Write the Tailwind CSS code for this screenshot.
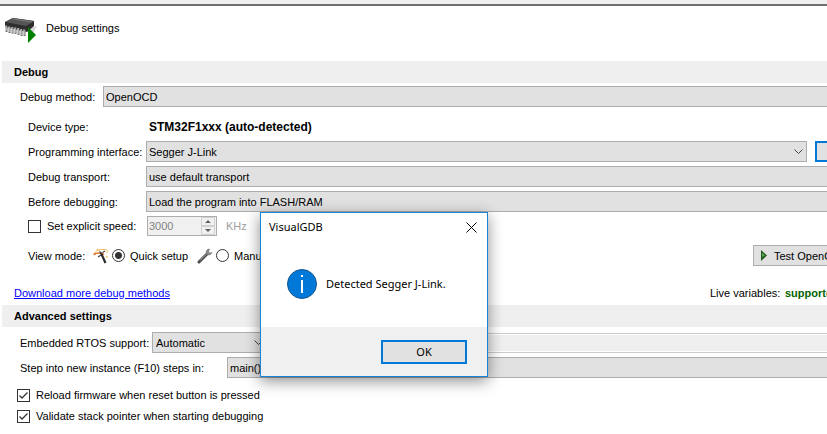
<!DOCTYPE html>
<html lang="en">
<head>
<meta charset="utf-8">
<title>Debug settings</title>
<script src="https://cdn.jsdelivr.net/npm/@tailwindcss/browser@4"></script>
</head>
<body class="relative min-h-screen overflow-hidden bg-white font-['Liberation_Sans',Arial,sans-serif] text-[11px] leading-4 text-black">
<div class="h-[6px] border-b-2 border-[#6f6f6f] bg-[#f0f0f0]"></div>
<main class="w-[calc(100%+60px)]">
  <header class="flex h-[55px] items-start gap-2 pt-3 pl-1">
    <svg class="h-[26px] w-[34px]" viewBox="0 0 34 26">
      <path d="M24 10L33 8L30 14L24 17Z" fill="#d8d8d8"/>
      <path d="M9 0L30 3V8L23 14L1 9V4Z" fill="#2e2e2e"/>
      <path d="M9 0L30 3L22 8L1 4Z" fill="#555"/>
      <path d="M9 1L28 4" stroke="#7a7a7a"/>
      <path d="M2.500 7.500V14M5.500 8.500V15M8.500 9V15.500M11.500 9.500V16M14.500 10V17M17.500 11V18M20.500 11.500V18" stroke="#6a6a6a" stroke-width="2"/>
      <path d="M2 7.500V13M5 8.500V14M8 9V14.500M11 9.500V15M14 10V16M17 11V17M20 11.500V17" stroke="#e4e4e4"/>
      <path d="M24 9L32 17L24 25Z" fill="#008000"/>
    </svg>
    <h1 class="pt-[2px]">Debug settings</h1>
  </header>

  <section>
    <h2 class="ml-[2px] flex h-[22px] items-center bg-[#efefef] pl-3 font-bold">Debug</h2>
    <div class="mt-[3px] flex h-[21px] items-center pl-5">
      <label for="method" class="w-[83px]">Debug method:</label>
      <select id="method" class="h-[21px] flex-1 appearance-none border border-[#adadad] bg-[#e1e1e1] pl-[2px]"><option>OpenOCD</option></select>
    </div>
    <div class="mt-[10px] space-y-1 pl-7">
      <div class="flex h-5 items-center"><span class="w-[121px]">Device type:</span><strong class="text-xs">STM32F1xxx (auto-detected)</strong></div>
      <div class="flex h-[21px] items-center">
        <label for="iface" class="w-[118px]">Programming interface:</label>
        <div class="grid flex-1 items-center">
          <select id="iface" class="col-start-1 row-start-1 h-[21px] appearance-none border border-[#adadad] bg-[#e1e1e1] pl-[2px]"><option>Segger J-Link</option></select>
          <svg class="pointer-events-none col-start-1 row-start-1 mr-1 h-[6px] w-[9px] justify-self-end" viewBox="0 0 9 6" fill="none" stroke="#444"><path d="M.5.5L4.5 4.5L8.5.5"/></svg>
        </div>
        <button type="button" aria-label="Detect" class="ml-2 h-[21px] w-[72px] border-2 border-[#0078d7] bg-[#e1e1e1]"></button>
      </div>
      <div class="flex h-[21px] items-center">
        <label for="transport" class="w-[118px]">Debug transport:</label>
        <select id="transport" class="h-[21px] flex-1 appearance-none border border-[#adadad] bg-[#e1e1e1] pl-[2px]"><option>use default transport</option></select>
      </div>
      <div class="flex h-[21px] items-center">
        <label for="before" class="w-[118px]">Before debugging:</label>
        <select id="before" class="h-[21px] flex-1 appearance-none border border-[#adadad] bg-[#e1e1e1] pl-[2px]"><option>Load the program into FLASH/RAM</option></select>
      </div>
      <div class="flex h-5 items-center">
        <div class="flex w-[119px] items-center gap-[6px]">
          <input id="speed" type="checkbox" class="size-[13px] appearance-none border border-[#333] bg-white">
          <label for="speed">Set explicit speed:</label>
        </div>
        <div class="flex h-5 w-[70px] border border-[#adadad] bg-[#f0f0f0] text-[#838383]">
          <input id="khz" value="3000" disabled aria-label="Speed" class="w-0 flex-1 pl-px">
          <svg class="h-[18px] w-[15px]" viewBox="0 0 15 18"><path d="M.5.5H13.5V8.5H.5ZM.5 9.5H13.5V17.5H.5Z" fill="#f0f0f0" stroke="#d0d0d0"/><path d="M4 6H10L7 3ZM4 12H10L7 15Z" fill="#606060"/></svg>
        </div>
        <label for="khz" class="ml-[9px] text-[#a0a0a0]">KHz</label>
      </div>
    </div>
    <div class="mt-[9px] flex h-[21px] items-center pl-7">
      <span class="w-[65px]">View mode:</span>
      <svg class="size-4" viewBox="0 0 16 16" fill="none"><path d="M2.500 6.500C0 4 5 1.500 10 1.500C14 1.500 16 3 13.500 5" stroke="#f0b050"/><path d="M.5 6.500C4 4.500 9 4.500 11 6.500" stroke="#e07020" stroke-width="1.500"/><path d="M13 8L14.500 9.500M4 1L5.500 2.500" stroke="#f2c060" stroke-width="1.500"/><path d="M8 5L12.500 15" stroke="#2b2b2b" stroke-width="2.200"/><path d="M8 7L5 9M9.500 4.500L12 3M6.500 3.500L8.500 5.500" stroke="#444" stroke-width="1.300"/></svg>
      <input id="quick" name="mode" type="radio" checked class="ml-[3px] size-[13px] appearance-none rounded-full border border-[#333] bg-white checked:bg-[radial-gradient(circle,#333_3px,white_4px)]">
      <label for="quick" class="ml-[5px] w-[67px]">Quick setup</label>
      <svg class="size-4" viewBox="0 0 16 16" fill="none"><path d="M2 14L10.500 5.500" stroke="#4a4a4a" stroke-width="3" stroke-linecap="round"/><path d="M3 12.500L10 5.500" stroke="#a8a8a8"/><path d="M12.500 1C9.500 1 8.500 3.500 9.500 5.500C10.500 7.500 14 7.500 15 4.500L12.500 5L11.500 4Z" fill="#8a8a8a" stroke="#666" stroke-width=".5"/></svg>
      <input id="manual" name="mode" type="radio" class="ml-[3px] size-[13px] appearance-none rounded-full border border-[#333] bg-white">
      <label for="manual" class="ml-[5px]">Manual</label>
      <button type="button" class="ml-auto flex h-[21px] w-[134px] items-center gap-[7px] border border-[#adadad] bg-[#e1e1e1] pl-[7px] whitespace-nowrap"><svg class="h-[11px] w-[6px]" viewBox="0 0 6 11"><path d="M0 0L6 5.5L0 11Z" fill="#1d5c18"/><path d="M1 2.500L4 5.500L1 7Z" fill="#62a658"/></svg>Test OpenOCD</button>
    </div>
    <div class="mt-[17px] flex h-5 items-center pl-[14px]">
      <a href="#" class="text-[#0000ff] underline">Download more debug methods</a>
      <span class="ml-auto w-[75px]">Live variables:</span><strong class="w-[102px] text-[#006400]">supported</strong>
    </div>
  </section>

  <section>
    <h2 class="mt-[2px] ml-[2px] flex h-[22px] items-center bg-[#efefef] pl-3 font-bold">Advanced settings</h2>
    <div class="mt-[5px] flex h-[21px] items-center pl-5">
      <label for="rtos" class="w-[132px]">Embedded RTOS support:</label>
      <div class="grid w-[116px] items-center">
        <select id="rtos" class="col-start-1 row-start-1 h-[21px] appearance-none border border-[#adadad] bg-[#e1e1e1] pl-[3px]"><option>Automatic</option></select>
        <svg class="pointer-events-none col-start-1 row-start-1 mr-[5px] h-[6px] w-[9px] justify-self-end" viewBox="0 0 9 6" fill="none" stroke="#444"><path d="M.5.5L4.5 4.5L8.5.5"/></svg>
      </div>
      <input disabled aria-label="RTOS options" class="ml-2 h-5 flex-1 border border-[#ccc] bg-[#efefef] ring-1 ring-white ring-inset">
    </div>
    <div class="mt-1 flex h-[21px] items-center pl-5">
      <label for="step" class="w-[207px]">Step into new instance (F10) steps in:</label>
      <select id="step" class="h-[21px] flex-1 appearance-none border border-[#adadad] bg-[#e1e1e1] pl-[2px]"><option>main()</option></select>
    </div>
    <div class="mt-[7px] space-y-[1px] pl-[17px]">
      <div class="flex h-5 items-center gap-[6px]">
        <div class="grid"><input id="reload" type="checkbox" checked class="col-start-1 row-start-1 size-[13px] appearance-none border border-[#333] bg-white"><svg class="pointer-events-none col-start-1 row-start-1 size-[13px]" viewBox="0 0 13 13" fill="none" stroke="#333" stroke-width="1.3"><path d="M2.5 6.5L5 9L10.5 3.5"/></svg></div>
        <label for="reload">Reload firmware when reset button is pressed</label>
      </div>
      <div class="flex h-5 items-center gap-[6px]">
        <div class="grid"><input id="validate" type="checkbox" checked class="col-start-1 row-start-1 size-[13px] appearance-none border border-[#333] bg-white"><svg class="pointer-events-none col-start-1 row-start-1 size-[13px]" viewBox="0 0 13 13" fill="none" stroke="#333" stroke-width="1.3"><path d="M2.5 6.5L5 9L10.5 3.5"/></svg></div>
        <label for="validate">Validate stack pointer when starting debugging</label>
      </div>
    </div>
  </section>
</main>

<div role="dialog" aria-labelledby="dlg-title" class="absolute top-[212px] left-[260px] w-[228px] border border-[#1883d7] bg-white font-['Noto_Sans','Open_Sans',sans-serif] text-[11px] shadow-[0_4px_14px_rgba(0,0,0,0.45)]">
  <div class="flex h-7 items-center justify-between pr-[10px] pl-2">
    <h2 id="dlg-title">VisualGDB</h2>
    <button type="button" aria-label="Close"><svg class="size-[11px]" viewBox="0 0 11 11" stroke="#000"><path d="M.5.5L10.5 10.5M10.5.5L.5 10.5"/></svg></button>
  </div>
  <div class="flex h-[86px] items-center gap-[9px] pl-[26px]">
    <svg class="size-[30px]" viewBox="0 0 30 30"><circle cx="15" cy="15" r="14.5" fill="#0078d7" stroke="#17568c"/><path d="M14 6H16V8H14ZM14 11H16V24H14Z" fill="#fff"/></svg>
    <p>Detected Segger J-Link.</p>
  </div>
  <div class="flex justify-end bg-[#f0f0f0] pt-[13px] pr-5 pb-3">
    <button type="button" class="h-6 w-[86px] border-2 border-[#0078d7] bg-[#e1e1e1]">OK</button>
  </div>
</div>
</body>
</html>
